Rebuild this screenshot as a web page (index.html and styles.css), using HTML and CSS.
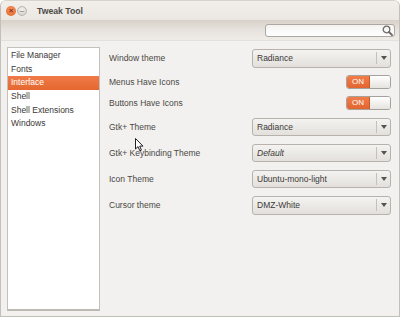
FILE: index.html
```html
<html>
<head>
  <link rel="stylesheet" href="styles.css">
</head>
<body>
  <div class="window">

    <div class="titlebar">
      <span class="wbtn close">&times;</span>
      <span class="wbtn mini">&ndash;</span>
      <span class="title">Tweak Tool</span>
    </div>

    <div class="toolbar">
      <div class="search">
        <svg width="11" height="11" viewBox="0 0 11 11">
          <circle cx="4.5" cy="4.5" r="3.3" fill="none" stroke="#6e6a66" stroke-width="1.3"/>
          <line x1="7" y1="7" x2="10" y2="10" stroke="#6e6a66" stroke-width="1.8" stroke-linecap="round"/>
        </svg>
      </div>
    </div>

    <div class="content">
      <ul class="sidebar">
        <li>File Manager</li>
        <li>Fonts</li>
        <li class="selected">Interface</li>
        <li>Shell</li>
        <li>Shell Extensions</li>
        <li>Windows</li>
      </ul>

      <div class="panel">
        <div class="label">Window theme</div>
        <div class="combo"><span>Radiance</span><i class="arrow"></i></div>

        <div class="label">Menus Have Icons</div>
        <div class="switch"><span class="on">ON</span><span class="thumb"></span></div>

        <div class="label">Buttons Have Icons</div>
        <div class="switch"><span class="on">ON</span><span class="thumb"></span></div>

        <div class="label">Gtk+ Theme</div>
        <div class="combo"><span>Radiance</span><i class="arrow"></i></div>

        <div class="label">Gtk+ Keybinding Theme</div>
        <div class="combo"><span class="italic">Default</span><i class="arrow"></i></div>

        <div class="label">Icon Theme</div>
        <div class="combo"><span>Ubuntu-mono-light</span><i class="arrow"></i></div>

        <div class="label">Cursor theme</div>
        <div class="combo"><span>DMZ-White</span><i class="arrow"></i></div>

        <svg class="pointer" width="9" height="14" viewBox="0 0 9 14">
          <path d="M0.5 0.5 L0.5 11 L3 8.6 L4.8 12.8 L6.4 12.1 L4.7 8.1 L8 8.1 Z" fill="#fff" stroke="#222" stroke-width="1" stroke-linejoin="round"/>
        </svg>
      </div>
    </div>

  </div>
</body>
</html>
```

FILE: styles.css
```css
html, body {
	margin: 0;
	width: 400px;
	height: 317px;
	overflow: hidden;
	background: #ffffff;
}

body {
	font-family: "Liberation Sans", Arial, sans-serif;
	font-size: 8.5px;
}

.window {
	box-sizing: border-box;
	width: 400px;
	height: 317px;
	display: flex;
	flex-direction: column;
	background: #f2f1ef;
	border: 1px solid #c3bfb9;
	border-top-color: #d8d3cd;
	border-radius: 6px 6px 0 0;
	overflow: hidden;
}

.titlebar {
	height: 19px;
	display: flex;
	align-items: center;
	padding-left: 5px;
	background: linear-gradient(#f2efeb, #ebe7e2);
}

.wbtn {
	width: 10px;
	height: 10px;
	border-radius: 50%;
	margin-right: 1px;
	display: flex;
	align-items: center;
	justify-content: center;
	font-size: 8px;
	line-height: 10px;
	font-weight: bold;
}

.close {
	background: radial-gradient(circle at 50% 35%, #f7925f, #e2622a);
	color: #8a3414;
}

.mini {
	background: radial-gradient(circle at 50% 35%, #f4f2ef, #cfcac4);
	border: 1px solid #b9b4ae;
	box-sizing: border-box;
	color: #8c8782;
}

.title {
	margin-left: 9px;
	font-weight: bold;
	font-size: 8.7px;
	color: #4d4b48;
}

.toolbar {
	height: 20px;
	display: flex;
	align-items: center;
	justify-content: flex-end;
	padding-right: 4px;
	background: linear-gradient(#d8d1c9, #e6e1dc 45%, #efece8);
	border-bottom: 1px solid #e4e1dd;
}

.search {
	box-sizing: border-box;
	width: 130px;
	height: 13px;
	background: linear-gradient(#f4f3f2, #ffffff);
	border: 1px solid #aca7a1;
	border-radius: 3px;
	display: flex;
	align-items: center;
	justify-content: flex-end;
	padding-right: 1px;
}

.content {
	flex: 1;
	display: flex;
	padding: 6px 8px 5px 6px;
}

.sidebar {
	list-style: none;
	margin: 0;
	padding: 1px 0 0 0;
	width: 93px;
	box-sizing: border-box;
	background: #ffffff;
	border: 1px solid #c4c0bb;
	border-bottom: 2px solid #bdb9b3;
	color: #3a3836;
}

.sidebar li {
	height: 13.7px;
	line-height: 13.7px;
	padding-left: 3px;
	white-space: nowrap;
}

.sidebar .selected {
	background: linear-gradient(#f07a48, #e4682f);
	color: #ffffff;
}

.panel {
	position: relative;
	flex: 1;
	display: grid;
	grid-template-columns: 1fr 139px;
	align-content: start;
	align-items: center;
	row-gap: 7.7px;
	padding: 2px 0 0 9px;
	color: #4a4845;
}

.label {
	white-space: nowrap;
}

.combo {
	box-sizing: border-box;
	height: 18.5px;
	display: flex;
	align-items: center;
	padding-left: 4px;
	background: linear-gradient(#f4f3f1, #e3e0dc);
	border: 1px solid #b7b2ac;
	border-radius: 3px;
	color: #3c3a37;
}

.combo span {
	flex: 1;
}

.italic {
	font-style: italic;
}

.arrow {
	width: 13px;
	height: 12px;
	border-left: 1px solid #c5c0ba;
	display: flex;
	align-items: center;
	justify-content: center;
}

.arrow::after {
	content: "";
	border-left: 3px solid transparent;
	border-right: 3px solid transparent;
	border-top: 4px solid #57534f;
	margin-left: 1px;
}

.switch {
	justify-self: end;
	box-sizing: border-box;
	width: 45px;
	height: 13.5px;
	display: flex;
	border: 1px solid #a7a19b;
	border-radius: 3px;
	overflow: hidden;
}

.switch .on {
	width: 22px;
	background: linear-gradient(#f27d49, #e26530);
	border-right: 1px solid #c85a2a;
	color: #ffffff;
	font-size: 8px;
	line-height: 11.5px;
	text-align: center;
}

.switch .thumb {
	flex: 1;
	background: linear-gradient(#ffffff, #e6e3df);
}

.pointer {
	position: absolute;
	left: 35px;
	top: 91px;
}
```
